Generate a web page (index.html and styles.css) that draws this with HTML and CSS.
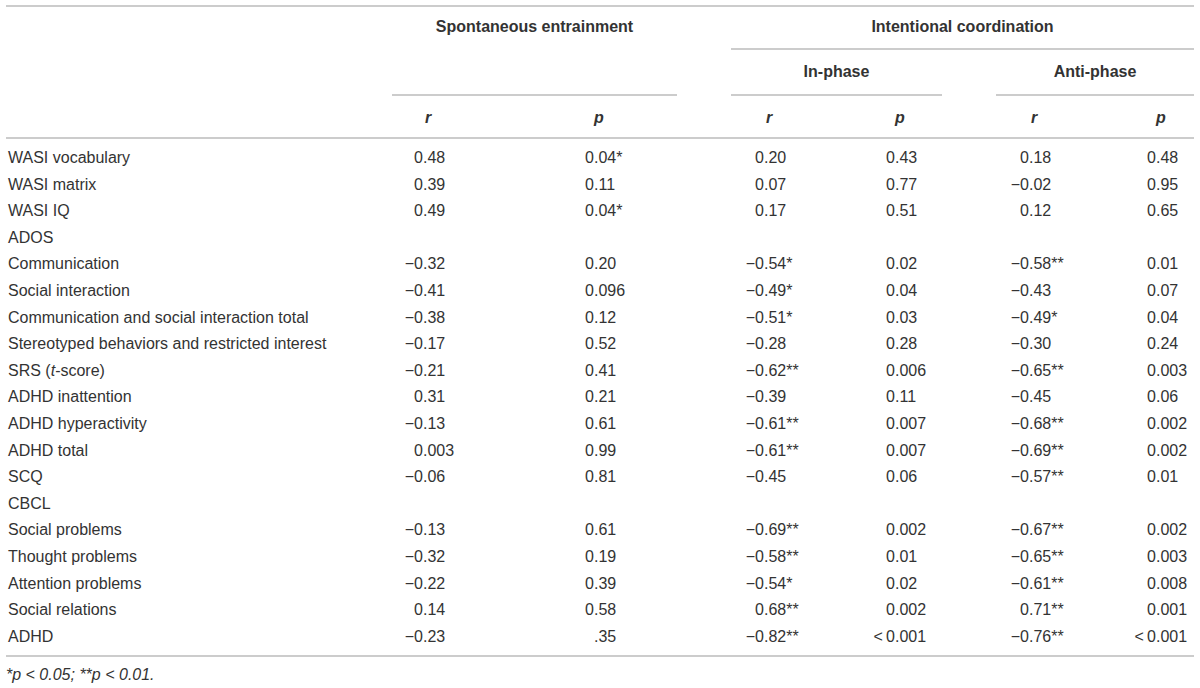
FILE: index.html
```html
<!DOCTYPE html>
<html lang="en">
<head>
<meta charset="utf-8">
<title>Correlations table</title>
<link rel="stylesheet" href="styles.css">
</head>
<body>
<div class="table">
  <div class="head">
    <div class="grp g-spont gap">Spontaneous entrainment</div>
    <div class="grp g-int">Intentional coordination</div>
    <div class="grp g-in gap">In-phase</div>
    <div class="grp g-anti">Anti-phase</div>
    <div class="sub k0"></div>
    <div class="sub k1"><span class="h">r</span></div>
    <div class="sub k2"><span class="h">p</span></div>
    <div class="sub k3"><span class="h">r</span></div>
    <div class="sub k4"><span class="h">p</span></div>
    <div class="sub k5"><span class="h">r</span></div>
    <div class="sub k6"><span class="h">p</span></div>
  </div>
  <div class="body">
    <div class="row"><div>WASI vocabulary</div><div><span class="i">0</span>.48</div><div><span class="i">0</span>.04*</div><div><span class="i">0</span>.20</div><div><span class="i">0</span>.43</div><div><span class="i">0</span>.18</div><div><span class="i">0</span>.48</div></div>
    <div class="row"><div>WASI matrix</div><div><span class="i">0</span>.39</div><div><span class="i">0</span>.11</div><div><span class="i">0</span>.07</div><div><span class="i">0</span>.77</div><div><span class="i">−0</span>.02</div><div><span class="i">0</span>.95</div></div>
    <div class="row"><div>WASI IQ</div><div><span class="i">0</span>.49</div><div><span class="i">0</span>.04*</div><div><span class="i">0</span>.17</div><div><span class="i">0</span>.51</div><div><span class="i">0</span>.12</div><div><span class="i">0</span>.65</div></div>
    <div class="row"><div>ADOS</div><div></div><div></div><div></div><div></div><div></div><div></div></div>
    <div class="row"><div>Communication</div><div><span class="i">−0</span>.32</div><div><span class="i">0</span>.20</div><div><span class="i">−0</span>.54*</div><div><span class="i">0</span>.02</div><div><span class="i">−0</span>.58**</div><div><span class="i">0</span>.01</div></div>
    <div class="row"><div>Social interaction</div><div><span class="i">−0</span>.41</div><div><span class="i">0</span>.096</div><div><span class="i">−0</span>.49*</div><div><span class="i">0</span>.04</div><div><span class="i">−0</span>.43</div><div><span class="i">0</span>.07</div></div>
    <div class="row"><div>Communication and social interaction total</div><div><span class="i">−0</span>.38</div><div><span class="i">0</span>.12</div><div><span class="i">−0</span>.51*</div><div><span class="i">0</span>.03</div><div><span class="i">−0</span>.49*</div><div><span class="i">0</span>.04</div></div>
    <div class="row"><div>Stereotyped behaviors and restricted interest</div><div><span class="i">−0</span>.17</div><div><span class="i">0</span>.52</div><div><span class="i">−0</span>.28</div><div><span class="i">0</span>.28</div><div><span class="i">−0</span>.30</div><div><span class="i">0</span>.24</div></div>
    <div class="row"><div>SRS (<em>t</em>-score)</div><div><span class="i">−0</span>.21</div><div><span class="i">0</span>.41</div><div><span class="i">−0</span>.62**</div><div><span class="i">0</span>.006</div><div><span class="i">−0</span>.65**</div><div><span class="i">0</span>.003</div></div>
    <div class="row"><div>ADHD inattention</div><div><span class="i">0</span>.31</div><div><span class="i">0</span>.21</div><div><span class="i">−0</span>.39</div><div><span class="i">0</span>.11</div><div><span class="i">−0</span>.45</div><div><span class="i">0</span>.06</div></div>
    <div class="row"><div>ADHD hyperactivity</div><div><span class="i">−0</span>.13</div><div><span class="i">0</span>.61</div><div><span class="i">−0</span>.61**</div><div><span class="i">0</span>.007</div><div><span class="i">−0</span>.68**</div><div><span class="i">0</span>.002</div></div>
    <div class="row"><div>ADHD total</div><div><span class="i">0</span>.003</div><div><span class="i">0</span>.99</div><div><span class="i">−0</span>.61**</div><div><span class="i">0</span>.007</div><div><span class="i">−0</span>.69**</div><div><span class="i">0</span>.002</div></div>
    <div class="row"><div>SCQ</div><div><span class="i">−0</span>.06</div><div><span class="i">0</span>.81</div><div><span class="i">−0</span>.45</div><div><span class="i">0</span>.06</div><div><span class="i">−0</span>.57**</div><div><span class="i">0</span>.01</div></div>
    <div class="row"><div>CBCL</div><div></div><div></div><div></div><div></div><div></div><div></div></div>
    <div class="row"><div>Social problems</div><div><span class="i">−0</span>.13</div><div><span class="i">0</span>.61</div><div><span class="i">−0</span>.69**</div><div><span class="i">0</span>.002</div><div><span class="i">−0</span>.67**</div><div><span class="i">0</span>.002</div></div>
    <div class="row"><div>Thought problems</div><div><span class="i">−0</span>.32</div><div><span class="i">0</span>.19</div><div><span class="i">−0</span>.58**</div><div><span class="i">0</span>.01</div><div><span class="i">−0</span>.65**</div><div><span class="i">0</span>.003</div></div>
    <div class="row"><div>Attention problems</div><div><span class="i">−0</span>.22</div><div><span class="i">0</span>.39</div><div><span class="i">−0</span>.54*</div><div><span class="i">0</span>.02</div><div><span class="i">−0</span>.61**</div><div><span class="i">0</span>.008</div></div>
    <div class="row"><div>Social relations</div><div><span class="i">0</span>.14</div><div><span class="i">0</span>.58</div><div><span class="i">0</span>.68**</div><div><span class="i">0</span>.002</div><div><span class="i">0</span>.71**</div><div><span class="i">0</span>.001</div></div>
    <div class="row"><div>ADHD</div><div><span class="i">−0</span>.23</div><div><span class="i"></span>.35</div><div><span class="i">−0</span>.82**</div><div><span class="i">&lt;&#8201;0</span>.001</div><div><span class="i">−0</span>.76**</div><div><span class="i">&lt;&#8201;0</span>.001</div></div>
  </div>
  <p class="note">*p &lt; 0.05; **p &lt; 0.01.</p>
</div>
</body>
</html>
```

FILE: styles.css
```css
* {
  box-sizing: border-box;
  margin: 0;
  padding: 0;
}

body {
  background: #ffffff;
  color: #333333;
  font-family: "Liberation Sans", Arial, sans-serif;
  font-size: 16px;
}

.table {
  margin: 5px 6px 0;
  width: 1188px;
}

.head {
  display: grid;
  grid-template-columns: 386px 168px 171px 129px 136px 124px 74px;
  grid-template-rows: 43px 46px 43px;
  border-top: 2px solid #cccccc;
}

.grp {
  font-weight: 700;
  text-align: center;
  line-height: 20px;
  border-bottom: 2px solid #cccccc;
}

.gap {
  margin-right: 54px;
}

.g-spont {
  grid-column: 2 / 4;
  grid-row: 1 / 3;
  padding-top: 10px;
}

.g-int {
  grid-column: 4 / 8;
  grid-row: 1;
  padding-top: 10px;
}

.g-in {
  grid-column: 4 / 6;
  grid-row: 2;
  padding-top: 12px;
}

.g-anti {
  grid-column: 6 / 8;
  grid-row: 2;
  padding-top: 12px;
}

.sub {
  grid-row: 3;
  border-bottom: 2px solid #cccccc;
  padding-top: 12px;
  line-height: 20px;
}

.h {
  display: inline-block;
  width: 58px;
  text-align: center;
  font-weight: 700;
  font-style: italic;
}

.k1 { padding-left: 7px; }
.k2 { padding-left: 10px; }
.k3 { padding-left: 9px; }
.k4 { padding-left: 11px; }
.k5 { padding-left: 9px; }
.k6 { padding-left: 12px; }

.body {
  border-bottom: 2px solid #cccccc;
  padding: 6px 0 5px;
}

.row {
  display: grid;
  grid-template-columns: 386px 168px 171px 129px 136px 124px 74px;
  height: 26.6px;
  line-height: 26.6px;
  white-space: nowrap;
}

.row > div:first-child { padding-left: 2px; }
.row > div:nth-child(2) { padding-left: 7px; }
.row > div:nth-child(3) { padding-left: 10px; }
.row > div:nth-child(4) { padding-left: 9px; }
.row > div:nth-child(5) { padding-left: 11px; }
.row > div:nth-child(6) { padding-left: 9px; }
.row > div:nth-child(7) { padding-left: 12px; }

.i {
  display: inline-block;
  width: 24px;
  text-align: right;
}

.note {
  margin-top: 8px;
  font-style: italic;
  line-height: 20px;
}
```
